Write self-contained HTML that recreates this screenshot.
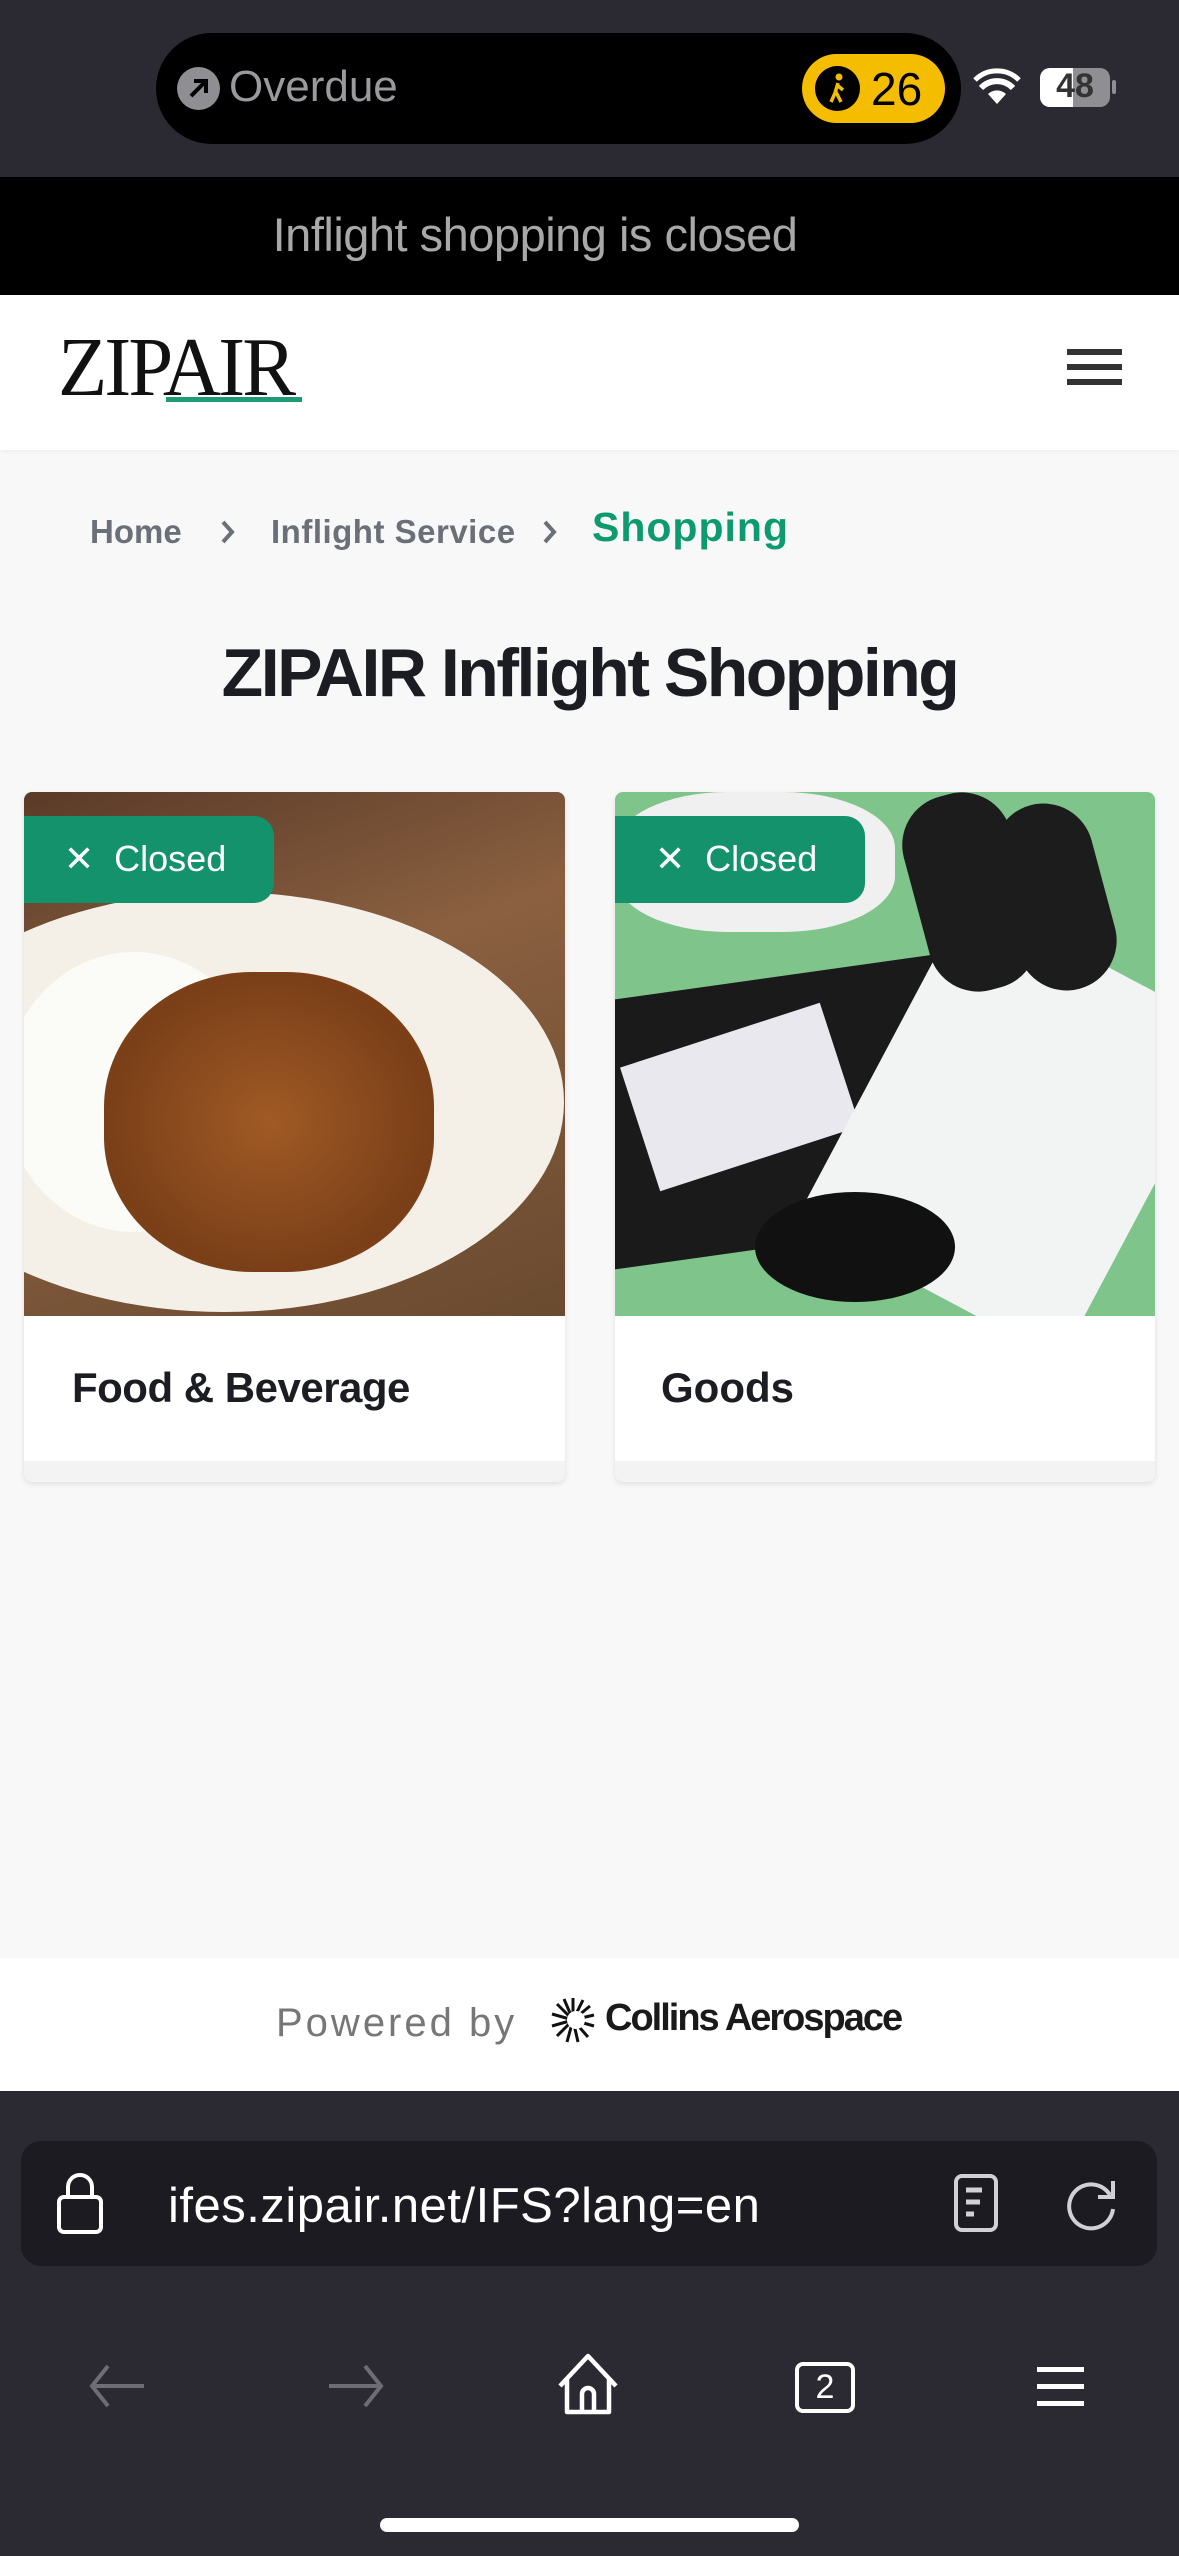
<!DOCTYPE html>
<html><head><meta charset="utf-8"><style>
*{margin:0;padding:0;box-sizing:border-box}
body{width:1179px;height:2556px;position:relative;overflow:hidden;background:#f8f8f8;font-family:"Liberation Sans",sans-serif}
.abs{position:absolute}
</style></head><body>
<!-- status bar -->
<div class="abs" style="left:0;top:0;width:1179px;height:177px;background:#2b2a33"></div>
<div class="abs" style="left:156px;top:33px;width:805px;height:111px;background:#000;border-radius:56px"></div>
<div class="abs" style="left:177px;top:67px;width:43px;height:43px;border-radius:50%;background:#8e8e93"></div>
<svg class="abs" style="left:177px;top:67px" width="43" height="43"><path d="M14 29 L29 14 M17 14 H29 V26" stroke="#000" stroke-width="4" fill="none"/></svg>
<div class="abs" style="left:229px;top:62px;font-size:44px;color:#9a9a9e">Overdue</div>
<div class="abs" style="left:802px;top:54px;width:143px;height:69px;background:#f5bd00;border-radius:35px"></div>
<div class="abs" style="left:815px;top:66px;width:45px;height:45px;border-radius:50%;background:#000"></div>
<svg class="abs" style="left:815px;top:66px" width="45" height="45"><circle cx="24" cy="11" r="3.5" fill="#f5bd00"/><path d="M23 17 L20 27 L16 36 M21 26 L26 36 M22 19 L28 24" stroke="#f5bd00" stroke-width="3.5" fill="none"/></svg>
<div class="abs" style="left:871px;top:62px;font-size:46px;color:#000">26</div>
<svg class="abs" style="left:973px;top:68px" width="48" height="38"><path d="M24 36 L33 26 A13 13 0 0 0 15 26 Z" fill="#fff"/><path d="M8 20 A22 22 0 0 1 40 20" stroke="#fff" stroke-width="6" fill="none"/><path d="M2 12 A31 31 0 0 1 46 12" stroke="#fff" stroke-width="5" fill="none"/></svg>
<div class="abs" style="left:1040px;top:68px;width:70px;height:39px;border-radius:10px;background:#8e8e93;overflow:hidden"><div style="width:33px;height:39px;background:#fff"></div></div>
<div class="abs" style="left:1043px;top:67px;width:64px;text-align:center;font-size:34px;font-weight:bold;color:#333">48</div>
<div class="abs" style="left:1112px;top:80px;width:4px;height:14px;background:#8e8e93;border-radius:2px"></div>
<!-- banner -->
<div class="abs" style="left:0;top:177px;width:1179px;height:118px;background:#000"></div>
<div class="abs" style="left:0;top:207px;width:1070px;text-align:center;font-size:47px;color:#a8a8a8;letter-spacing:-0.5px">Inflight shopping is closed</div>
<!-- header -->
<div class="abs" style="left:0;top:295px;width:1179px;height:155px;background:#fff;box-shadow:0 2px 4px rgba(0,0,0,.04)"></div>
<div class="abs" style="left:58px;top:326px;font-family:'Liberation Serif',serif;font-size:84px;color:#111;transform:scaleX(.96);transform-origin:left top;line-height:84px;letter-spacing:-3px">ZIPAIR</div>
<div class="abs" style="left:166px;top:397px;width:136px;height:5px;background:#1e9b75"></div>
<div class="abs" style="left:1067px;top:349px;width:55px;height:6px;background:#333"></div>
<div class="abs" style="left:1067px;top:364px;width:55px;height:6px;background:#333"></div>
<div class="abs" style="left:1067px;top:379px;width:55px;height:6px;background:#333"></div>
<!-- breadcrumb -->
<div class="abs" style="left:90px;top:513px;font-size:33px;font-weight:bold;color:#6b6f78">Home</div>
<svg class="abs" style="left:218px;top:517px" width="20" height="30"><path d="M5 5 L14 15 L5 25" stroke="#6b6f78" stroke-width="4" fill="none"/></svg>
<div class="abs" style="left:271px;top:513px;font-size:33px;font-weight:bold;color:#6b6f78;letter-spacing:0.5px">Inflight Service</div>
<svg class="abs" style="left:540px;top:517px" width="20" height="30"><path d="M5 5 L14 15 L5 25" stroke="#6b6f78" stroke-width="4" fill="none"/></svg>
<div class="abs" style="left:592px;top:504px;font-size:41px;font-weight:bold;color:#0e9a6f;letter-spacing:1px">Shopping</div>
<div class="abs" style="left:0;top:634px;width:1179px;text-align:center;font-size:68px;font-weight:bold;color:#1c1d22;letter-spacing:-2.5px">ZIPAIR Inflight Shopping</div>
<!-- card 1 -->
<div class="abs" style="left:24px;top:792px;width:541px;height:690px;background:#f3f3f3;border-radius:8px;box-shadow:0 2px 6px rgba(0,0,0,.1);overflow:hidden">
 <div style="height:524px;background:linear-gradient(160deg,#5a3a28,#8a6040 40%,#6a4a30);position:relative;overflow:hidden">
  <div style="position:absolute;left:-140px;top:100px;width:680px;height:420px;border-radius:50%;background:#f4f0e8"></div>
  <div style="position:absolute;left:-20px;top:160px;width:260px;height:280px;border-radius:50%;background:#fbfbf8"></div>
  <div style="position:absolute;left:80px;top:180px;width:330px;height:300px;border-radius:45%;background:radial-gradient(#a05a25,#7a3f18 70%,#8a4a1e)"></div>
 </div>
 <div style="height:145px;background:#fff"></div>
</div>
<!-- card 2 -->
<div class="abs" style="left:615px;top:792px;width:540px;height:690px;background:#f3f3f3;border-radius:8px;box-shadow:0 2px 6px rgba(0,0,0,.1);overflow:hidden">
 <div style="height:524px;background:#7fc48a;position:relative;overflow:hidden">
  <div style="position:absolute;left:0;top:180px;width:390px;height:270px;background:#1a1a1a;transform:skewY(-8deg)"></div>
  <div style="position:absolute;left:20px;top:240px;width:210px;height:130px;background:#e8e8ee;transform:rotate(-18deg)"></div>
  <div style="position:absolute;left:250px;top:150px;width:300px;height:370px;background:#f2f4f4;transform:rotate(28deg)"></div>
  <div style="position:absolute;left:0;top:0;width:280px;height:140px;border-radius:40%;background:#f0f0f0"></div>
  <div style="position:absolute;left:300px;top:0;width:110px;height:200px;border-radius:50px;background:#1c1c1c;transform:rotate(-15deg)"></div>
  <div style="position:absolute;left:390px;top:10px;width:100px;height:190px;border-radius:50px;background:#1c1c1c;transform:rotate(-15deg)"></div>
  <div style="position:absolute;left:140px;top:400px;width:200px;height:110px;border-radius:50%;background:#111"></div>
 </div>
 <div style="height:145px;background:#fff"></div>
</div>
<!-- badges -->
<div class="abs" style="left:24px;top:816px;width:250px;height:87px;background:#13926c;border-radius:0 20px 20px 0"></div>
<div class="abs" style="left:615px;top:816px;width:250px;height:87px;background:#13926c;border-radius:0 20px 20px 0"></div>
<div class="abs" style="left:64px;top:838px;font-size:36px;color:#fff">✕&nbsp;&nbsp;Closed</div>
<div class="abs" style="left:655px;top:838px;font-size:36px;color:#fff">✕&nbsp;&nbsp;Closed</div>
<div class="abs" style="left:72px;top:1364px;font-size:42px;font-weight:bold;color:#1c1d22;letter-spacing:-0.5px">Food &amp; Beverage</div>
<div class="abs" style="left:661px;top:1364px;font-size:42px;font-weight:bold;color:#1c1d22;letter-spacing:0px">Goods</div>
<!-- footer -->
<div class="abs" style="left:0;top:1958px;width:1179px;height:133px;background:#fff"></div>
<div class="abs" style="left:276px;top:2001px;font-size:40px;color:#777;letter-spacing:3px">Powered by</div>
<svg class="abs" style="left:550px;top:1995px" width="46" height="50"><g stroke="#111" stroke-width="3"><path d="M23 25 L23 3 M23 25 L33 5 M23 25 L40 11 M23 25 L44 20 M23 25 L44 31 M23 25 L38 42 M23 25 L28 47 M23 25 L17 47 M23 25 L7 41 M23 25 L2 31 M23 25 L2 19 M23 25 L7 9 M23 25 L14 4"/></g><circle cx="26" cy="25" r="9" fill="#fff"/></svg>
<div class="abs" style="left:605px;top:1997px;font-size:38px;font-weight:bold;color:#1a1a1a;letter-spacing:-2px">Collins Aerospace</div>
<!-- browser -->
<div class="abs" style="left:0;top:2091px;width:1179px;height:465px;background:#2b2a33"></div>
<div class="abs" style="left:21px;top:2141px;width:1136px;height:125px;background:#1c1b22;border-radius:20px"></div>
<svg class="abs" style="left:55px;top:2173px" width="50" height="62"><path d="M13 24 V14 A12 12 0 0 1 37 14 V24" stroke="#fff" stroke-width="4" fill="none"/><rect x="4" y="24" width="42" height="35" rx="5" stroke="#fff" stroke-width="4" fill="none"/></svg>
<div class="abs" style="left:168px;top:2178px;font-size:49px;color:#fff;letter-spacing:0.5px">ifes.zipair.net/IFS?lang=en</div>
<svg class="abs" style="left:952px;top:2173px" width="50" height="62"><rect x="4" y="3" width="40" height="54" rx="6" stroke="#d0d0d6" stroke-width="4" fill="none"/><path d="M14 17 H30 M14 29 H28 M14 41 H22" stroke="#d0d0d6" stroke-width="5"/></svg>
<svg class="abs" style="left:1063px;top:2173px" width="60" height="62"><path d="M47 22 A22 22 0 1 0 50 36" stroke="#d0d0d6" stroke-width="4" fill="none"/><path d="M50 8 V24 H35" stroke="#d0d0d6" stroke-width="4" fill="none"/></svg>
<svg class="abs" style="left:88px;top:2362px" width="60" height="48"><path d="M56 24 H5 M20 4 L4 24 L20 44" stroke="#6e6d75" stroke-width="4" fill="none"/></svg>
<svg class="abs" style="left:325px;top:2362px" width="60" height="48"><path d="M4 24 H55 M40 4 L56 24 L40 44" stroke="#6e6d75" stroke-width="4" fill="none"/></svg>
<svg class="abs" style="left:555px;top:2352px" width="66" height="66"><path d="M5 34 L33 4 L61 34 M12 27 V60 H54 V27 M27 60 V42 A6 6 0 0 1 39 42 V60" stroke="#fff" stroke-width="4.5" fill="none" stroke-linejoin="round"/></svg>
<div class="abs" style="left:795px;top:2362px;width:60px;height:51px;border:4.5px solid #fff;border-radius:8px;color:#fff;font-size:34px;text-align:center;line-height:43px">2</div>
<div class="abs" style="left:1037px;top:2367px;width:47px;height:5px;background:#fff"></div>
<div class="abs" style="left:1037px;top:2384px;width:47px;height:5px;background:#fff"></div>
<div class="abs" style="left:1037px;top:2401px;width:47px;height:5px;background:#fff"></div>
<div class="abs" style="left:380px;top:2518px;width:419px;height:14px;background:#fff;border-radius:7px"></div>
</body></html>
